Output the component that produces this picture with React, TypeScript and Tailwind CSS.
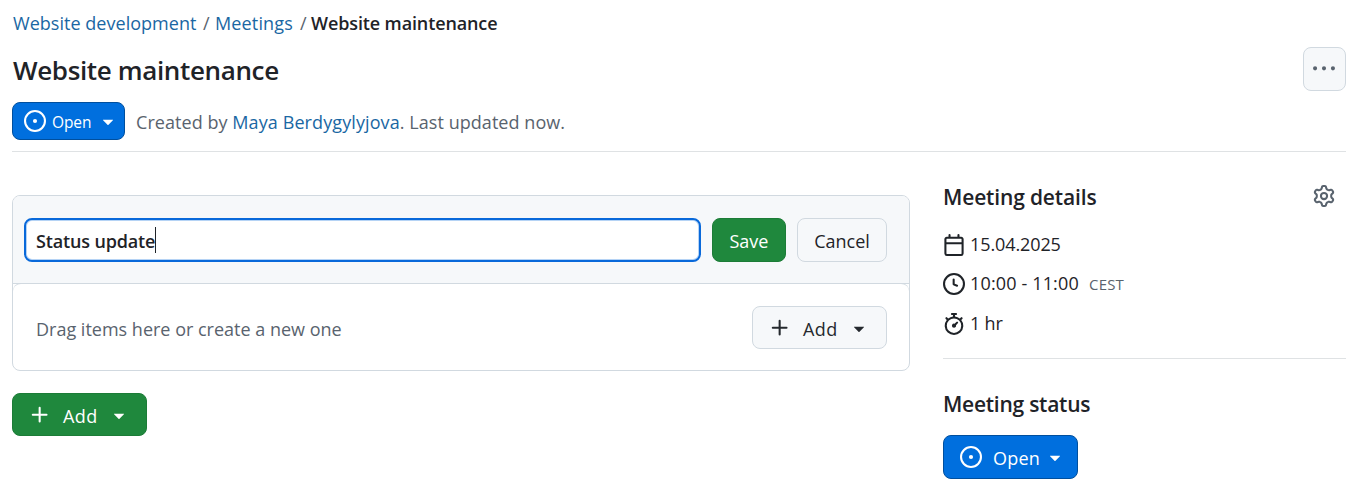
import React from "react";

const PATHS = {
  issue:
    "M8 9.5a1.5 1.5 0 1 0 0-3 1.5 1.5 0 0 0 0 3Z M8 0a8 8 0 1 1 0 16A8 8 0 0 1 8 0ZM1.5 8a6.5 6.5 0 1 0 13 0 6.5 6.5 0 0 0-13 0Z",
  triangle:
    "m4.427 7.427 3.396 3.396a.25.25 0 0 0 .354 0l3.396-3.396A.25.25 0 0 0 11.396 7H4.604a.25.25 0 0 0-.177.427Z",
  plus: "M7.75 2a.75.75 0 0 1 .75.75V7h4.25a.75.75 0 0 1 0 1.5H8.5v4.25a.75.75 0 0 1-1.5 0V8.5H2.75a.75.75 0 0 1 0-1.5H7V2.75A.75.75 0 0 1 7.75 2Z",
  kebab:
    "M8 9a1.5 1.5 0 1 0 0-3 1.5 1.5 0 0 0 0 3ZM1.5 9a1.5 1.5 0 1 0 0-3 1.5 1.5 0 0 0 0 3Zm13 0a1.5 1.5 0 1 0 0-3 1.5 1.5 0 0 0 0 3Z",
  calendar:
    "M4.75 0a.75.75 0 0 1 .75.75V2h5V.75a.75.75 0 0 1 1.5 0V2h1.25c.966 0 1.75.784 1.75 1.75v10.5A1.75 1.75 0 0 1 13.25 16H2.75A1.75 1.75 0 0 1 1 14.25V3.75C1 2.784 1.784 2 2.75 2H4V.75A.75.75 0 0 1 4.75 0ZM2.5 7.5v6.75c0 .138.112.25.25.25h10.5a.25.25 0 0 0 .25-.25V7.5Zm10.75-4H2.75a.25.25 0 0 0-.25.25V6h11V3.75a.25.25 0 0 0-.25-.25Z",
  clock:
    "M8 0a8 8 0 1 1 0 16A8 8 0 0 1 8 0ZM1.5 8a6.5 6.5 0 1 0 13 0 6.5 6.5 0 0 0-13 0Zm7-3.25v2.992l2.028.812a.75.75 0 0 1-.557 1.392l-2.5-1A.751.751 0 0 1 7 8.25v-3.5a.75.75 0 0 1 1.5 0Z",
  stopwatch:
    "M5.75.75A.75.75 0 0 1 6.5 0h3a.75.75 0 0 1 0 1.5h-.75v1l-.001.041a6.724 6.724 0 0 1 3.464 1.435l.007-.006.75-.75a.749.749 0 0 1 1.275.326.749.749 0 0 1-.215.734l-.75.75-.006.007a6.75 6.75 0 1 1-10.548 0L2.72 5.03l-.75-.75a.751.751 0 0 1 .018-1.042.751.751 0 0 1 1.042-.018l.75.75.007.006A6.72 6.72 0 0 1 7.25 2.541V1.5H6.5a.75.75 0 0 1-.75-.75ZM8 14.5a5.25 5.25 0 1 0-.001-10.501A5.25 5.25 0 0 0 8 14.5Zm.389-6.7 1.33-1.33a.75.75 0 1 1 1.061 1.06L9.45 8.861A1.503 1.503 0 0 1 8 10.75a1.499 1.499 0 1 1 .389-2.95Z",
  gear: "M8 0a8.2 8.2 0 0 1 .701.031C9.444.095 9.99.645 10.16 1.29l.288 1.107c.018.066.079.158.212.224.231.114.454.243.668.386.123.082.233.09.299.071l1.103-.303c.644-.176 1.392.021 1.82.63.27.385.506.792.704 1.218.315.675.111 1.422-.364 1.891l-.814.806c-.049.048-.098.147-.088.294.016.257.016.515 0 .772-.01.147.038.246.088.294l.814.806c.475.469.679 1.216.364 1.891a7.977 7.977 0 0 1-.704 1.217c-.428.61-1.176.807-1.82.63l-1.102-.302c-.067-.019-.177-.011-.3.071a5.909 5.909 0 0 1-.668.386c-.133.066-.194.158-.211.224l-.29 1.106c-.168.646-.715 1.196-1.458 1.26a8.006 8.006 0 0 1-1.402 0c-.743-.064-1.289-.614-1.458-1.26l-.289-1.106c-.018-.066-.079-.158-.212-.224a5.738 5.738 0 0 1-.668-.386c-.123-.082-.233-.09-.299-.071l-1.103.303c-.644.176-1.392-.021-1.82-.63a8.12 8.12 0 0 1-.704-1.218c-.315-.675-.111-1.422.363-1.891l.815-.806c.05-.048.098-.147.088-.294a6.214 6.214 0 0 1 0-.772c.01-.147-.038-.246-.088-.294l-.815-.806C.635 6.045.431 5.298.746 4.623a7.92 7.92 0 0 1 .704-1.217c.428-.61 1.176-.807 1.82-.63l1.102.302c.067.019.177.011.3-.071.214-.143.437-.272.668-.386.133-.066.194-.158.211-.224l.29-1.106C6.009.645 6.556.095 7.299.03 7.53.01 7.764 0 8 0Zm-.571 1.525c-.036.003-.108.036-.137.146l-.289 1.105c-.147.561-.549.967-.998 1.189-.173.086-.34.183-.5.29-.417.278-.97.423-1.529.27l-1.103-.303c-.109-.03-.175.016-.195.045-.22.312-.412.644-.573.99-.014.031-.021.11.059.19l.815.806c.411.406.562.957.53 1.456a4.709 4.709 0 0 0 0 .582c.032.499-.119 1.05-.53 1.456l-.815.806c-.081.08-.073.159-.059.19.162.346.353.677.573.989.02.03.085.076.195.046l1.102-.303c.56-.153 1.113-.008 1.53.27.161.107.328.204.501.29.447.222.85.629.997 1.189l.289 1.105c.029.109.101.143.137.146a6.6 6.6 0 0 0 1.142 0c.036-.003.108-.036.137-.146l.289-1.105c.147-.561.549-.967.998-1.189.173-.086.34-.183.5-.29.417-.278.97-.423 1.529-.27l1.103.303c.109.029.175-.016.195-.045.22-.313.411-.644.573-.99.014-.031.021-.11-.059-.19l-.815-.806c-.411-.406-.562-.957-.53-1.456a4.709 4.709 0 0 0 0-.582c-.032-.499.119-1.05.53-1.456l.815-.806c.081-.08.073-.159.059-.19a6.464 6.464 0 0 0-.573-.989c-.02-.03-.085-.076-.195-.046l-1.102.303c-.56.153-1.113.008-1.53-.27a4.44 4.44 0 0 0-.501-.29c-.447-.222-.85-.629-.997-1.189l-.289-1.105c-.029-.11-.101-.143-.137-.146a6.6 6.6 0 0 0-1.142 0ZM11 8a3 3 0 1 1-6 0 3 3 0 0 1 6 0ZM9.5 8a1.5 1.5 0 1 0-3.001.001A1.5 1.5 0 0 0 9.5 8Z",
};

function Icon({ name, className = "" }: { name: keyof typeof PATHS; className?: string }) {
  return (
    <svg viewBox="0 0 16 16" className={`size-[22px] shrink-0 fill-current ${className}`} aria-hidden="true">
      <path d={PATHS[name]} />
    </svg>
  );
}

function AddButton({ className }: { className: string }) {
  return (
    <button className={`flex h-[43px] w-[135px] items-start rounded-lg border pt-[10px] pl-4 ${className}`}>
      <Icon name="plus" />
      <span className="ml-3 w-[45px] text-left tracking-[0.4px]">Add</span>
      <Icon name="triangle" />
    </button>
  );
}

export default function App() {
  return (
    <div className="flex h-[484px] flex-col overflow-hidden bg-white pr-[19px] pl-3 font-['Open_Sans','Noto_Sans',sans-serif] text-[18px] leading-6 text-[#1f2328]">
      <nav className="flex pt-[11px] pl-px whitespace-nowrap text-[#59636e]">
        <a className="w-[190px] tracking-[0.03px] text-[#1a67a3]">Website development</a>
        <span className="w-3">/</span>
        <a className="w-[85px] tracking-[0.15px] text-[#1a67a3]">Meetings</a>
        <span className="w-[11px]">/</span>
        <span className="font-semibold tracking-[-0.12px] text-[#1f2328]">Website maintenance</span>
      </nav>

      <header className="mt-3 flex h-[55px] items-start justify-between">
        <h1 className="pt-[7px] pl-px text-[26px] leading-8 font-semibold tracking-[-0.36px]">Website maintenance</h1>
        <button className="flex h-11 w-[43px] rounded-lg border border-[#d1d9e0] bg-[#f6f8fa] pt-[10px] pl-[9px] text-[#59636e]">
          <Icon name="kebab" />
        </button>
      </header>

      <div className="flex h-[50px] items-start border-b border-[#dfe2e4] whitespace-nowrap">
        <button className="flex h-[38px] w-[113px] items-start rounded-lg border border-[#004f9e] bg-[#006fde] pt-[7px] pl-[11px] text-[15.5px] leading-6 text-white">
          <Icon name="issue" />
          <span className="ml-[6px] w-[45px] text-left tracking-[-0.1px]">Open</span>
          <Icon name="triangle" />
        </button>
        <p className="pt-2 pl-[11px] tracking-[0.05px] text-[#59636e]">
          Created by <a className="tracking-[0.1px] text-[#1a67a3]">Maya Berdygylyjova</a>. Last updated now.
        </p>
      </div>

      <div className="flex items-start justify-between">
        <main className="w-[898px] pt-[43px]">
          <section className="h-[176px] rounded-lg border border-[#d1d9e0]">
            <div className="flex h-[88px] items-start rounded-t-[7px] border-b border-[#d1d9e0] bg-[#f6f8fa] pt-[22px] pr-[22px] pl-[11px]">
              <div className="flex h-11 w-[677px] items-center rounded-lg border-2 border-[#0969da] bg-white pl-[10px] shadow-[inset_0_0_0_1px_#b5d3f5]">
                <span className="pt-0.5 font-semibold tracking-[-0.15px]">Status update</span>
                <span className="h-[26px] w-px bg-[#1f2328]" />
              </div>
              <button className="ml-[11px] h-11 w-[74px] rounded-lg border border-[#1c7c37] bg-[#1f883d] pt-0.5 text-white">Save</button>
              <button className="ml-[11px] h-11 w-[90px] rounded-lg border border-[#d1d9e0] bg-[#f6f8fa] pt-0.5">Cancel</button>
            </div>
            <div className="-mt-px flex h-[87px] items-start justify-between rounded-t-lg border-t border-[#d1d9e0] pt-[22px] pr-[22px] pl-[23px]">
              <p className="pt-[11px] text-[#59636e]">Drag items here or create a new one</p>
              <AddButton className="border-[#d1d9e0] bg-[#f6f8fa] text-[#25292e]" />
            </div>
          </section>
          <AddButton className="mt-[22px] border-[#1c7c37] bg-[#1f883d] text-white" />
        </main>

        <aside className="w-[403px] pt-[31px]">
          <div className="flex items-start justify-between pr-[11px]">
            <h2 className="text-[21px] leading-7 font-semibold tracking-[-0.15px]">Meeting details</h2>
            <Icon name="gear" className="mt-0.5 text-[#59636e]" />
          </div>
          <div className="flex h-[148px] flex-col border-b border-[#dfe2e4] pt-[21px] whitespace-nowrap">
            <div className="flex h-[39px] items-start">
              <Icon name="calendar" className="mt-0.5" />
              <span className="pl-[5px] tracking-[-0.1px]">15.04.2025</span>
            </div>
            <div className="flex h-10 items-start">
              <Icon name="clock" className="mt-0.5" />
              <span className="w-[124px] pl-[5px] tracking-[0.15px]">10:00 - 11:00</span>
              <span className="pt-px text-[15px] tracking-[0.2px] text-[#59636e]">CEST</span>
            </div>
            <div className="flex items-start">
              <Icon name="stopwatch" className="mt-0.5" />
              <span className="pl-[5px] tracking-[-0.2px]">1 hr</span>
            </div>
          </div>
          <h2 className="mt-[31px] text-[21px] leading-7 font-semibold tracking-[-0.25px]">Meeting status</h2>
          <button className="mt-[17px] flex h-11 w-[135px] items-start rounded-lg border border-[#004f9e] bg-[#006fde] pt-[10px] pl-4 text-white">
            <Icon name="issue" />
            <span className="ml-[11px] w-[51px] text-left tracking-[0.2px]">Open</span>
            <Icon name="triangle" />
          </button>
        </aside>
      </div>
    </div>
  );
}
